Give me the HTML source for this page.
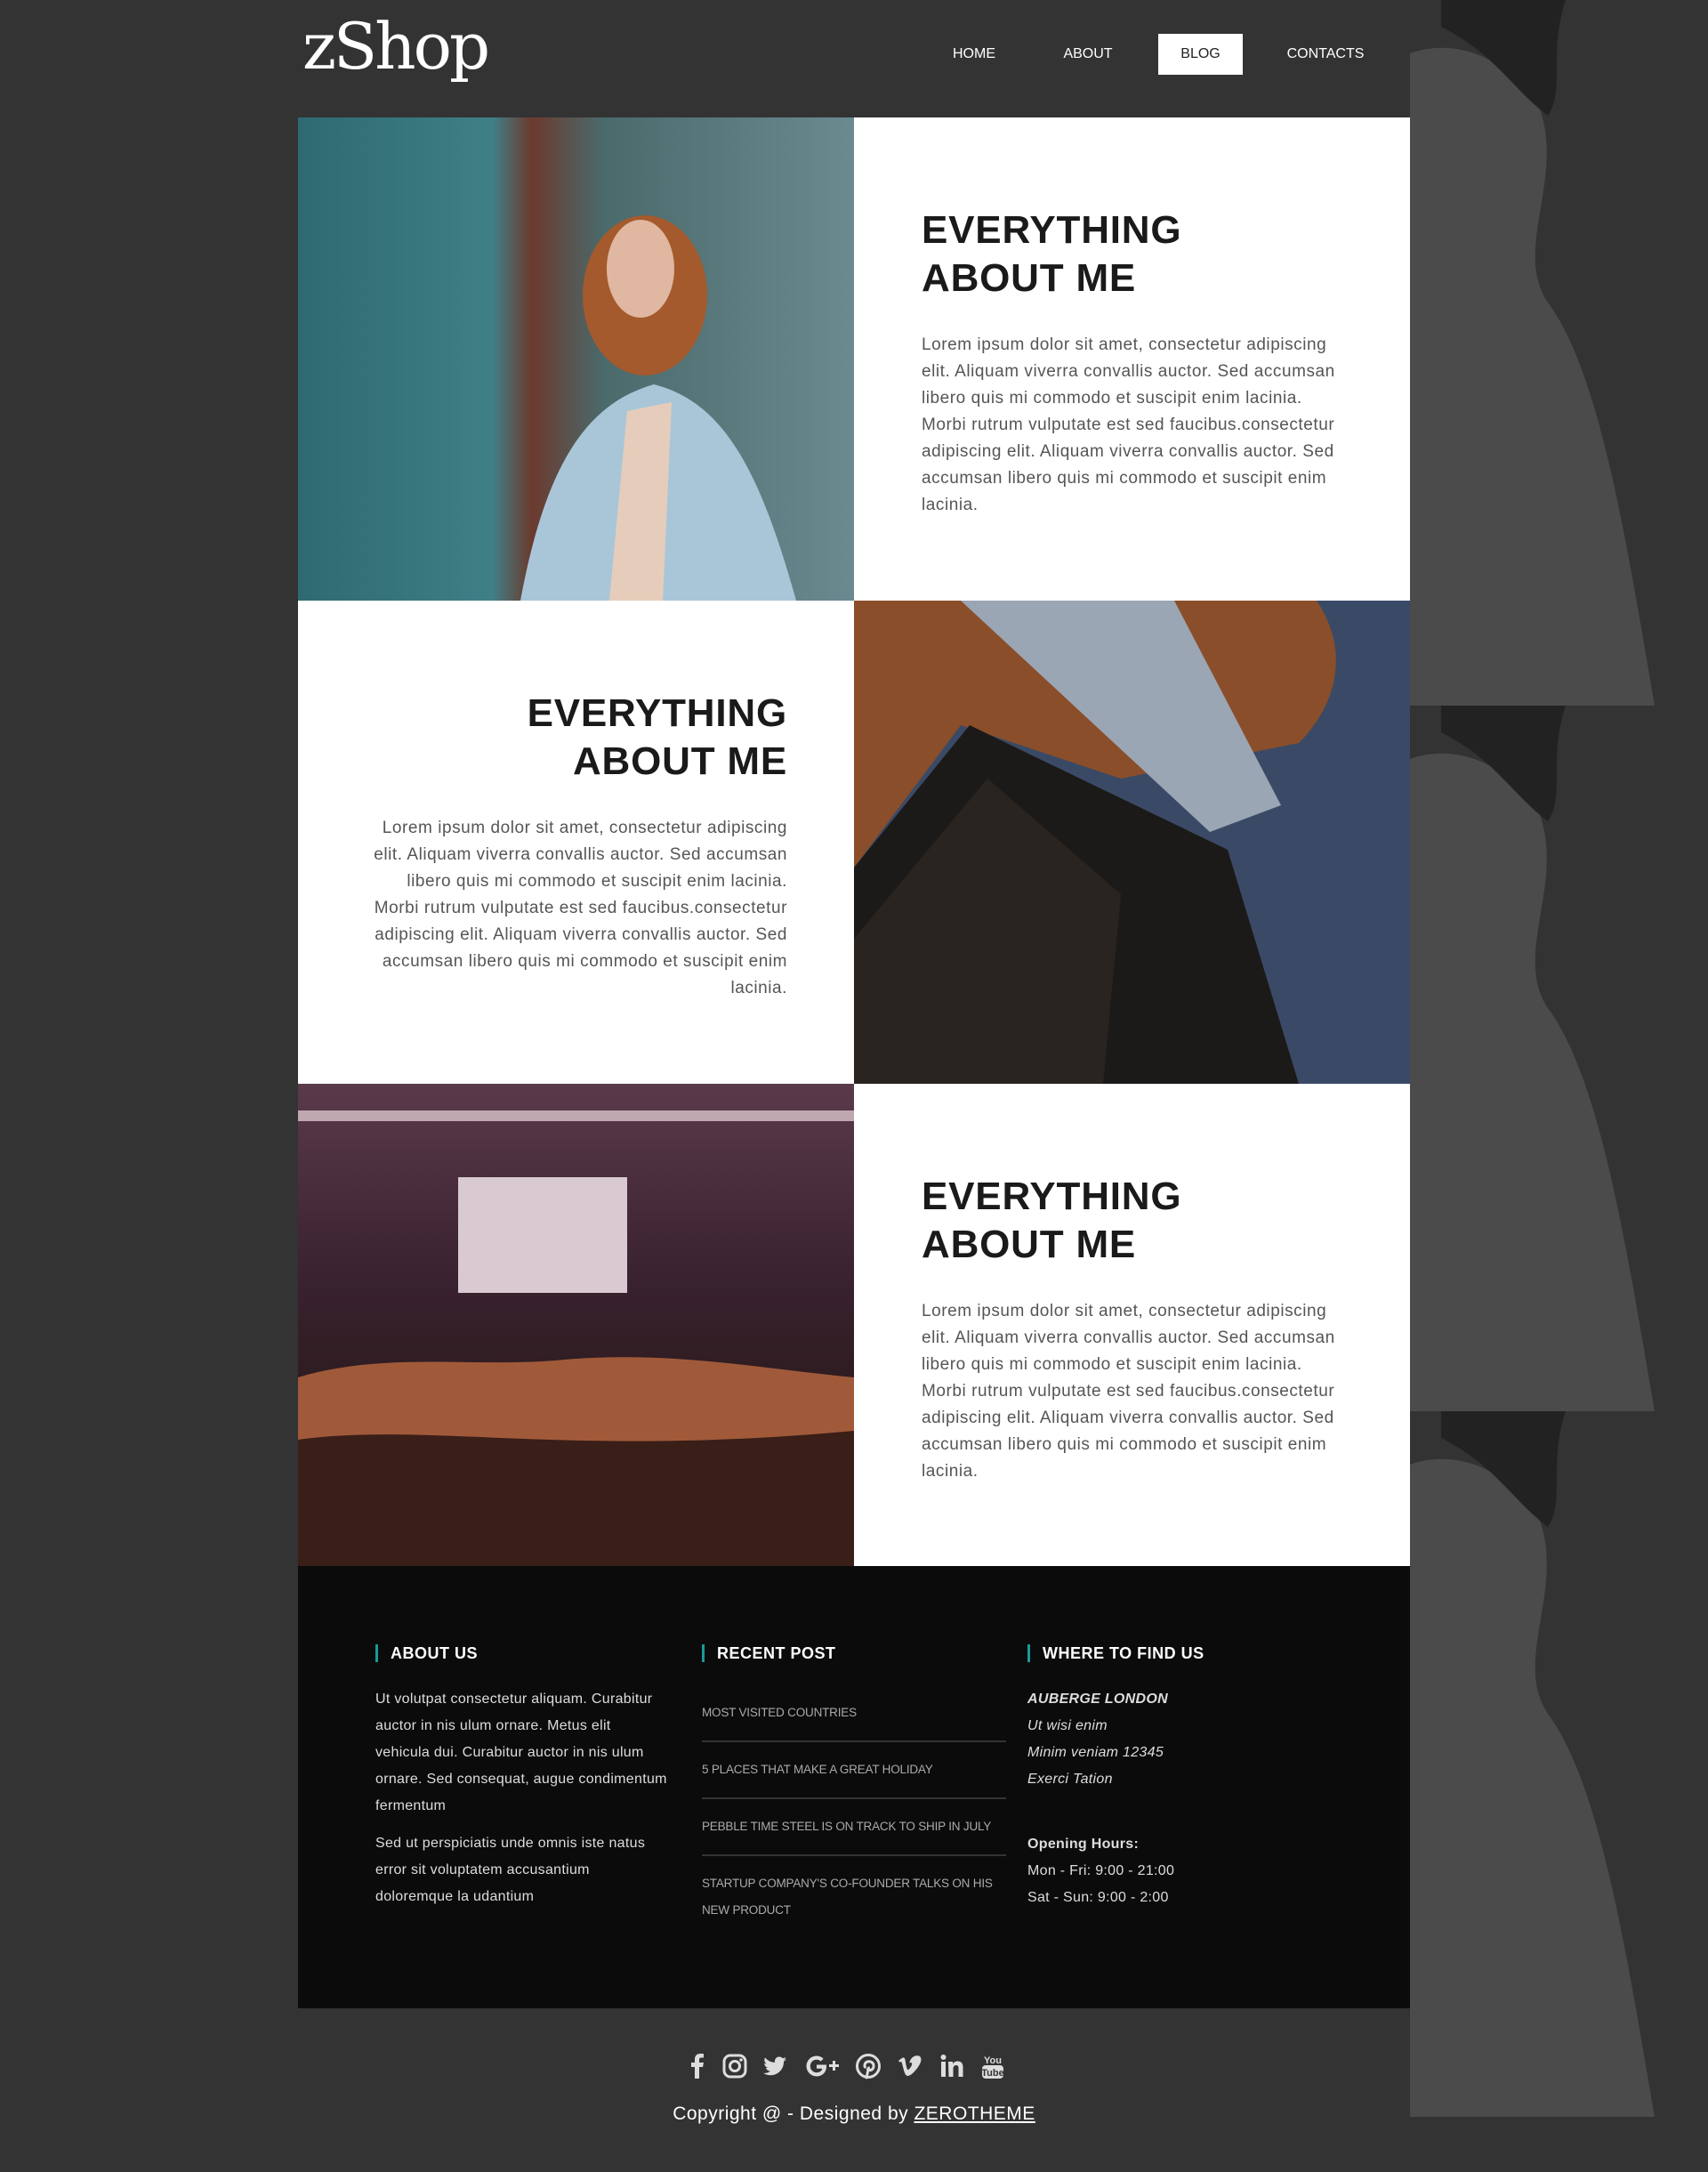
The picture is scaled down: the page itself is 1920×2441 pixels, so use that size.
<!DOCTYPE html>
<html><head><meta charset="utf-8">
<style>
*{margin:0;padding:0;box-sizing:border-box}
body{width:1920px;height:2441px;background:#333334;position:relative;overflow:hidden;font-family:"Liberation Sans",sans-serif}
.tile{position:absolute;left:0;width:1920px;height:793px}
.logo{position:absolute;left:340px;top:10px;font-family:"DejaVu Serif","Liberation Serif",serif;font-size:72px;color:#fff;letter-spacing:-3px;font-weight:normal}
.nav{position:absolute;top:38px;height:46px;font-size:16px;color:#fff;line-height:46px;text-align:center}
.row{position:absolute;left:335px;width:1250px;height:543px}
.img{position:absolute;top:0;width:625px;height:543px;overflow:hidden}
.txt{position:absolute;top:0;width:625px;height:543px;background:#fff}
.txt h2{position:absolute;top:100px;font-size:44px;line-height:54px;font-weight:bold;color:#1a1a1a;letter-spacing:.8px}
.txt p{position:absolute;top:241px;width:475px;font-size:19px;line-height:30px;color:#555;letter-spacing:.55px}
.l h2,.l p{left:76px}
.r h2,.r p{right:75px;text-align:right}
.foot{position:absolute;left:335px;top:1760px;width:1250px;height:497px;background:#0b0b0b;color:#ddd}
.foot h4{position:absolute;top:88px;font-size:18px;color:#fff;border-left:3px solid #1a9a9a;padding-left:14px;line-height:20px;letter-spacing:.5px}
.col{position:absolute;font-size:16px;line-height:30px;letter-spacing:.3px}
.post{font-size:13.5px;color:#aaa;border-bottom:2px solid #333;padding:16px 0;letter-spacing:-.2px}
.ic{position:absolute;top:2306px;width:32px;height:32px}
</style></head><body>
<svg class="tile" style="top:0" viewBox="0 0 1920 793"><path d="M1585 60 C1640 40 1700 70 1730 120 C1760 200 1700 280 1740 340 C1800 420 1830 620 1860 793 L1585 793Z" fill="#4b4b4b"/><path d="M1620 0 L1760 0 C1740 60 1760 100 1740 130 C1700 100 1680 60 1620 30Z" fill="#222"/></svg>
<svg class="tile" style="top:793px" viewBox="0 0 1920 793"><path d="M1585 60 C1640 40 1700 70 1730 120 C1760 200 1700 280 1740 340 C1800 420 1830 620 1860 793 L1585 793Z" fill="#4b4b4b"/><path d="M1620 0 L1760 0 C1740 60 1760 100 1740 130 C1700 100 1680 60 1620 30Z" fill="#222"/></svg>
<svg class="tile" style="top:1586px" viewBox="0 0 1920 793"><path d="M1585 60 C1640 40 1700 70 1730 120 C1760 200 1700 280 1740 340 C1800 420 1830 620 1860 793 L1585 793Z" fill="#4b4b4b"/><path d="M1620 0 L1760 0 C1740 60 1760 100 1740 130 C1700 100 1680 60 1620 30Z" fill="#222"/></svg>

<div class="logo">zShop</div>
<div class="nav" style="left:1050px;width:90px">HOME</div>
<div class="nav" style="left:1178px;width:90px">ABOUT</div>
<div class="nav" style="left:1302px;width:95px;background:#fff;color:#222">BLOG</div>
<div class="nav" style="left:1430px;width:120px">CONTACTS</div>

<div class="row" style="top:132px">
 <div class="img" style="left:0;background:linear-gradient(90deg,#2e6a72 0%,#3f7f86 35%,#6b3a2e 42%,#4a6a6c 55%,#6a8a90 100%)">
  <svg width="625" height="543"><ellipse cx="390" cy="200" rx="70" ry="90" fill="#a45a2c"/><ellipse cx="385" cy="170" rx="38" ry="55" fill="#e0b7a0"/><path d="M250 543 C280 380 330 320 400 300 C480 320 520 400 560 543Z" fill="#a9c6d8"/><path d="M370 330 L420 320 L410 543 L350 543Z" fill="#e6cdbb"/></svg>
 </div>
 <div class="txt l" style="left:625px"><h2>EVERYTHING<br>ABOUT ME</h2><p>Lorem ipsum dolor sit amet, consectetur adipiscing elit. Aliquam viverra convallis auctor. Sed accumsan libero quis mi commodo et suscipit enim lacinia. Morbi rutrum vulputate est sed faucibus.consectetur adipiscing elit. Aliquam viverra convallis auctor. Sed accumsan libero quis mi commodo et suscipit enim lacinia.</p></div>
</div>
<div class="row" style="top:675px">
 <div class="txt r" style="left:0"><h2>EVERYTHING<br>ABOUT ME</h2><p>Lorem ipsum dolor sit amet, consectetur adipiscing elit. Aliquam viverra convallis auctor. Sed accumsan libero quis mi commodo et suscipit enim lacinia. Morbi rutrum vulputate est sed faucibus.consectetur adipiscing elit. Aliquam viverra convallis auctor. Sed accumsan libero quis mi commodo et suscipit enim lacinia.</p></div>
 <div class="img" style="left:625px;background:#3a4a66">
  <svg width="625" height="543"><path d="M0 0 L520 0 C560 60 540 120 500 160 L300 200 L120 140 L0 300Z" fill="#8a4e2a"/><path d="M120 0 L360 0 L480 230 L400 260Z" fill="#9aa6b4"/><path d="M0 300 L130 140 L420 280 L500 543 L0 543Z" fill="#1c1a18"/><path d="M150 200 L300 330 L280 543 L0 543 L0 380Z" fill="#2a2420"/></svg>
 </div>
</div>
<div class="row" style="top:1218px">
 <div class="img" style="left:0;background:linear-gradient(180deg,#5a3a4a 0%,#3a2230 40%,#2a1a1a 70%,#1a1010 100%)">
  <svg width="625" height="543"><rect x="180" y="105" width="190" height="130" fill="#d8cad0"/><rect x="0" y="30" width="625" height="12" fill="#c0a8b0"/><path d="M0 330 C100 300 200 320 300 310 C420 300 520 320 625 330 L625 543 L0 543Z" fill="#a05a3a"/><path d="M0 400 C150 380 300 420 625 390 L625 543 L0 543Z" fill="#3a1e18"/></svg>
 </div>
 <div class="txt l" style="left:625px"><h2>EVERYTHING<br>ABOUT ME</h2><p>Lorem ipsum dolor sit amet, consectetur adipiscing elit. Aliquam viverra convallis auctor. Sed accumsan libero quis mi commodo et suscipit enim lacinia. Morbi rutrum vulputate est sed faucibus.consectetur adipiscing elit. Aliquam viverra convallis auctor. Sed accumsan libero quis mi commodo et suscipit enim lacinia.</p></div>
</div>

<div class="foot">
 <h4 style="left:87px">ABOUT US</h4>
 <h4 style="left:454px">RECENT POST</h4>
 <h4 style="left:820px">WHERE TO FIND US</h4>
 <div class="col" style="left:87px;top:135px;width:330px">Ut volutpat consectetur aliquam. Curabitur auctor in nis ulum ornare. Metus elit vehicula dui. Curabitur auctor in nis ulum ornare. Sed consequat, augue condimentum fermentum<div style="height:12px"></div>Sed ut perspiciatis unde omnis iste natus error sit voluptatem accusantium doloremque la udantium</div>
 <div class="col" style="left:454px;top:134px;width:342px">
  <div class="post">MOST VISITED COUNTRIES</div>
  <div class="post">5 PLACES THAT MAKE A GREAT HOLIDAY</div>
  <div class="post">PEBBLE TIME STEEL IS ON TRACK TO SHIP IN JULY</div>
  <div class="post" style="border:0">STARTUP COMPANY'S CO-FOUNDER TALKS ON HIS NEW PRODUCT</div>
 </div>
 <div class="col" style="left:820px;top:135px;width:320px;font-style:italic"><b>AUBERGE LONDON</b><br>Ut wisi enim<br>Minim veniam 12345<br>Exerci Tation<div style="height:43px"></div><span style="font-style:normal"><b>Opening Hours:</b><br>Mon - Fri: 9:00 - 21:00<br>Sat - Sun: 9:00 - 2:00</span></div>
</div>

<svg class="ic" style="left:768px" viewBox="0 0 32 32"><path d="M18 30V17h4l1-5h-5V9c0-1.5.5-2.5 2.5-2.5H23V2.2C22.5 2 21 2 19.3 2 15.6 2 13 4.2 13 8.4V12H9v5h4v13z" fill="#ddd"/></svg>
<svg class="ic" style="left:810px" viewBox="0 0 32 32"><rect x="4" y="4" width="24" height="24" rx="7" fill="none" stroke="#ddd" stroke-width="3"/><circle cx="16" cy="16" r="5.5" fill="none" stroke="#ddd" stroke-width="3"/><circle cx="23" cy="9" r="1.8" fill="#ddd"/></svg>
<svg class="ic" style="left:855px" viewBox="0 0 32 32"><path d="M29 8c-1 .5-2 .7-3 .9 1.1-.7 1.9-1.7 2.3-2.9-1 .6-2.2 1-3.3 1.3A5.2 5.2 0 0 0 16 11.9 14.8 14.8 0 0 1 5 6.4a5.2 5.2 0 0 0 1.6 7c-.9 0-1.7-.3-2.4-.7 0 2.6 1.8 4.7 4.2 5.2-.8.2-1.6.2-2.4.1.7 2.1 2.6 3.6 4.9 3.6A10.5 10.5 0 0 1 3 23.8 14.8 14.8 0 0 0 26 11.4V10.7C27.3 10 28.2 9 29 8z" fill="#ddd"/></svg>
<svg class="ic" style="left:903px;width:42px" viewBox="0 0 42 32"><path d="M15 14.5v4.2h6.3c-.5 2.6-2.8 4.5-6.3 4.5a7.2 7.2 0 0 1 0-14.4c1.8 0 3.4.7 4.6 1.8l3-3A11.4 11.4 0 0 0 15 4.5a11.5 11.5 0 0 0 0 23c6.6 0 11-4.7 11-11.2 0-.6 0-1.2-.2-1.8z" fill="#ddd"/><path d="M33 10v4h-4v3h4v4h3v-4h4v-3h-4v-4z" fill="#ddd"/></svg>
<svg class="ic" style="left:960px" viewBox="0 0 32 32"><circle cx="16" cy="16" r="12.5" fill="none" stroke="#ddd" stroke-width="3"/><path d="M14 29l2.5-11M15.5 19.5c1 1 2.2 1.3 3.3 1 2.4-.6 3.6-3.2 3.2-5.7-.5-3.2-4-4.7-7-3.7-2.6.9-3.700 3.7-2.6 6" fill="none" stroke="#ddd" stroke-width="3" stroke-linecap="round"/></svg>
<svg class="ic" style="left:1007px" viewBox="0 0 32 32"><path d="M3 10c3-2.5 5-4 6-3.5 1.6.3 1.7 4 2.4 7.6.7 3.5 1.4 6 2.4 6s3-2.8 4-5c1-2.3-.2-4-2.6-2.5C16.5 7 20 4 24.5 4.2 28.4 4.4 29 8 28 11.3 26.5 16.5 18 27 13.6 27 9.8 27 9 20 7 13c-.6-2-1-2.5-2.8-1.4z" fill="#ddd"/></svg>
<svg class="ic" style="left:1054px" viewBox="0 0 32 32"><rect x="4" y="11" width="5" height="17" fill="#ddd"/><circle cx="6.5" cy="6" r="3" fill="#ddd"/><path d="M12 11h5v2.5c1-1.7 3-3 5.5-3 4 0 6 2.5 6 7V28h-5v-9.5c0-2.3-.8-3.5-2.6-3.5-2 0-3.4 1.4-3.4 4V28h-5z" fill="#ddd"/></svg>
<svg class="ic" style="left:1100px" viewBox="0 0 32 32"><text x="16" y="13" text-anchor="middle" font-size="11" font-weight="bold" fill="#ddd" font-family="Liberation Sans">You</text><rect x="4" y="15" width="24" height="15" rx="4" fill="#ddd"/><text x="16" y="27" text-anchor="middle" font-size="11" font-weight="bold" fill="#333" font-family="Liberation Sans">Tube</text></svg>
<div style="position:absolute;left:0;top:2364px;width:1920px;text-align:center;color:#fff;font-size:21px;letter-spacing:.5px">Copyright @ - Designed by <u>ZEROTHEME</u></div>
</body></html>
